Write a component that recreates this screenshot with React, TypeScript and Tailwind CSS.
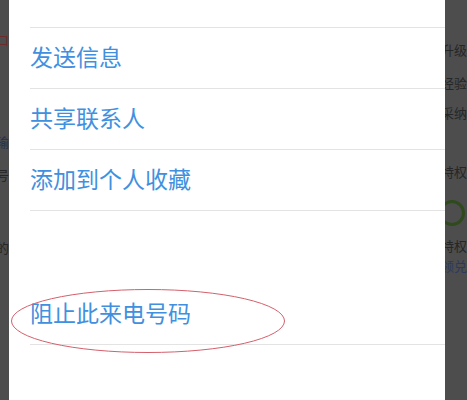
const font = { fontFamily: '"Noto Sans CJK SC", "Noto Sans", sans-serif' };

function Row({ label }: { label: string }) {
  return (
    <div className="flex h-[61px] shrink-0 items-center border-b border-[#e3e3e3] pb-[4px]">
      <span className="text-[23px] leading-none text-[#4190e0]">{label}</span>
    </div>
  );
}

function Frag({ text, top, color = "#262626", right = false }: { text: string; top: number; color?: string; right?: boolean }) {
  return (
    <div
      className={`flex h-[16px] shrink-0 overflow-hidden whitespace-nowrap text-[13px] leading-[16px] ${right ? "justify-end" : "justify-start -ml-[4px]"}`}
      style={{ marginTop: top, color }}
    >
      {text}
    </div>
  );
}

export default function App() {
  return (
    <div className="flex h-[400px] w-[467px] overflow-hidden bg-[#4d4d4d]" style={font}>
      {/* left edge of the dimmed page */}
      <div className="flex w-[9px] shrink-0 flex-col overflow-hidden">
        <Frag text="口" top={32} color="#6e2b2b" right />
        <Frag text="输" top={86} color="#26304a" right />
        <Frag text="又号" top={17} right />
        <Frag text="的" top={57} right />
      </div>

      {/* action sheet */}
      <div className="relative flex w-[436px] shrink-0 flex-col bg-white pl-[21px]">
        <div className="h-[28px] shrink-0 border-b border-[#e3e3e3]" />
        <Row label="发送信息" />
        <Row label="共享联系人" />
        <Row label="添加到个人收藏" />
        <div className="h-[73px] shrink-0" />
        <Row label="阻止此来电号码" />

        {/* red annotation ellipse */}
        <svg className="pointer-events-none absolute left-[1px] top-[288px]" width="276" height="66" viewBox="0 0 276 66">
          <ellipse cx="138" cy="33" rx="136.5" ry="31.5" fill="none" stroke="#d4606c" strokeWidth="1" />
        </svg>
      </div>

      {/* right edge of the dimmed page */}
      <div className="flex w-[22px] shrink-0 flex-col overflow-hidden">
        <Frag text="升级" top={42} />
        <Frag text="经验" top={17} />
        <Frag text="采纳" top={14} />
        <Frag text="特权" top={43} />
        <div className="-ml-[6px] mt-[20px] h-[26px] w-[26px] shrink-0 rounded-full border-[3px] border-[#2f4a1c]" />
        <Frag text="特权" top={12} />
        <Frag text="领兑" top={4} color="#2b3a5c" />
      </div>
    </div>
  );
}
